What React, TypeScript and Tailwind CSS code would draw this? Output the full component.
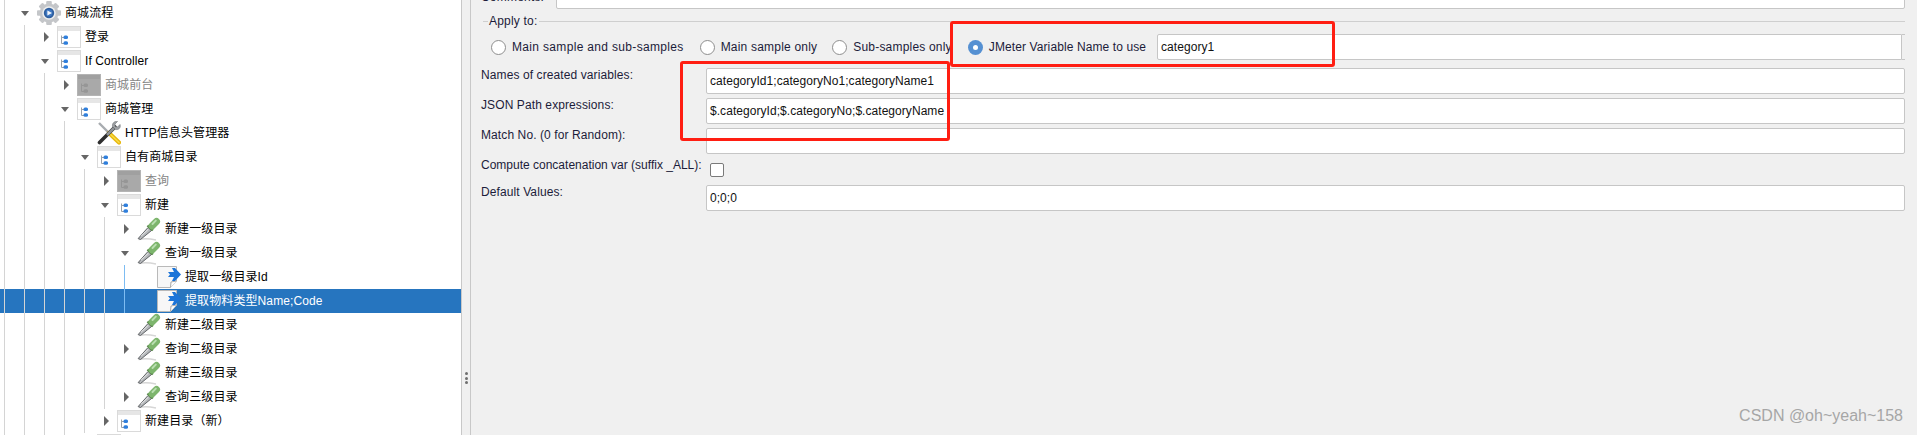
type IconName = "gear" | "folder" | "folderOff" | "tools" | "dropper" | "doc" | "none";

type TreeRow = {
  depth: number;
  label: string;
  icon: IconName;
  arrow?: "open" | "closed";
  disabled?: boolean;
  selected?: boolean;
};

const rows: TreeRow[] = [
  { depth: 0, label: "商城流程", icon: "gear", arrow: "open" },
  { depth: 1, label: "登录", icon: "folder", arrow: "closed" },
  { depth: 1, label: "If Controller", icon: "folder", arrow: "open" },
  { depth: 2, label: "商城前台", icon: "folderOff", arrow: "closed", disabled: true },
  { depth: 2, label: "商城管理", icon: "folder", arrow: "open" },
  { depth: 3, label: "HTTP信息头管理器", icon: "tools" },
  { depth: 3, label: "自有商城目录", icon: "folder", arrow: "open" },
  { depth: 4, label: "查询", icon: "folderOff", arrow: "closed", disabled: true },
  { depth: 4, label: "新建", icon: "folder", arrow: "open" },
  { depth: 5, label: "新建一级目录", icon: "dropper", arrow: "closed" },
  { depth: 5, label: "查询一级目录", icon: "dropper", arrow: "open" },
  { depth: 6, label: "提取一级目录Id", icon: "doc" },
  { depth: 6, label: "提取物料类型Name;Code", icon: "doc", selected: true },
  { depth: 5, label: "新建二级目录", icon: "dropper" },
  { depth: 5, label: "查询二级目录", icon: "dropper", arrow: "closed" },
  { depth: 5, label: "新建三级目录", icon: "dropper" },
  { depth: 5, label: "查询三级目录", icon: "dropper", arrow: "closed" },
  { depth: 4, label: "新建目录（新）", icon: "folder", arrow: "closed" },
  { depth: 3, label: "", icon: "folder" },
];

function GearIcon() {
  const teeth = [0, 45, 90, 135, 180, 225, 270, 315];
  return (
    <svg width="24" height="24" viewBox="0 0 24 24" className="shrink-0">
      <g fill="#c4c6c9">
        {teeth.map((a) => (
          <rect key={a} x="9.2" y="0" width="5.6" height="6" rx="1" transform={`rotate(${a} 12 12)`} />
        ))}
        <circle cx="12" cy="12" r="9.4" />
      </g>
      <circle cx="12" cy="12" r="6.8" fill="#eceded" />
      <circle cx="12" cy="12" r="5.2" fill="#2f5f9f" />
      <circle cx="12" cy="12" r="3.4" fill="#3f79c4" />
      <path d="M10.4 9.4 L15 12 L10.4 14.6 Z" fill="#f2f6fb" />
    </svg>
  );
}

function FolderIcon({ off }: { off?: boolean }) {
  return (
    <svg width="24" height="24" viewBox="0 0 24 24" className="shrink-0">
      <rect x="0.5" y="1.5" width="23" height="21" fill={off ? "#a9a9a9" : "#ffffff"} stroke={off ? "#b4b4b4" : "#dadada"} />
      <rect x="1" y="2" width="22" height="4" fill={off ? "#a0a0a0" : "#e6e6e6"} />
      <path d="M4.5 10.5 V18.5 H7 M4.5 12.5 H7" fill="none" stroke={off ? "#969696" : "#9aa0a8"} />
      <rect x="6.5" y="10.5" width="4.5" height="3.6" rx="1.5" fill={off ? "#969696" : "#2f7fdc"} />
      <rect x="6.5" y="16.2" width="4.5" height="3.6" rx="1.5" fill={off ? "#969696" : "#2f7fdc"} />
    </svg>
  );
}

function ToolsIcon() {
  return (
    <svg width="24" height="24" viewBox="0 0 24 24" className="shrink-0">
      <path d="M2 2 L12 12" stroke="#a8acb0" strokeWidth="2.4" />
      <path d="M12 12 L22 21.5" stroke="#e8b80e" strokeWidth="4.2" strokeLinecap="round" />
      <path d="M12 12 L22 21.5" stroke="#f7dc4a" strokeWidth="1.4" strokeLinecap="round" />
      <path d="M18 6 L2.5 21.5" stroke="#2e2e2e" strokeWidth="3.6" strokeLinecap="round" />
      <path d="M17 7 L10 14" stroke="#8f9296" strokeWidth="2.6" />
      <path d="M23 3.5 L20.5 6 L18 5.5 L18 3 L20.5 0.5 C17.5 0 15 2 15.5 5.5 L18.5 8.5 C22 9 24 6.5 23 3.5 Z" fill="#9ea1a5" stroke="#6d7074" strokeWidth="0.6" />
    </svg>
  );
}

function DropperIcon() {
  return (
    <svg width="24" height="24" viewBox="0 0 24 24" className="shrink-0">
      <path d="M1.5 22.5 C6 21.5 12 21.5 19 23" fill="none" stroke="#d6d6d6" strokeWidth="1.4" />
      <path d="M1.2 21.5 L11 10.5 L14.5 13.5 L3.5 22.5 Z" fill="#b4b7ba" stroke="#55585b" strokeWidth="0.9" />
      <path d="M4.2 19 L11.5 12" stroke="#efefef" strokeWidth="1" />
      <path d="M10.5 8.5 L15.8 13.5" stroke="#4f7f40" strokeWidth="2.4" />
      <path d="M15 9 L19.5 4.5" stroke="#7db56d" strokeWidth="7" strokeLinecap="round" />
      <path d="M15.5 7 L18.8 3.6" stroke="#b9deb0" strokeWidth="2" strokeLinecap="round" />
    </svg>
  );
}

function DocIcon() {
  return (
    <svg width="24" height="24" viewBox="0 0 24 24" className="shrink-0">
      <path d="M0.5 1.5 H19.5 V16 L13.5 22.5 H0.5 Z" fill="#f7f7f7" stroke="#b9b9b9" />
      <path d="M13.5 22.5 L14 17 L19.5 16" fill="#ffffff" stroke="#a8a8a8" />
      <path d="M11 7 H17 L15 3 H18 L24 9.5 L18 16 H15 L17 12 H11 L13 9.5 Z" fill="#1b74d8" />
    </svg>
  );
}

function RowIcon({ name }: { name: IconName }) {
  if (name === "gear") return <GearIcon />;
  if (name === "folder") return <FolderIcon />;
  if (name === "folderOff") return <FolderIcon off />;
  if (name === "tools") return <ToolsIcon />;
  if (name === "dropper") return <DropperIcon />;
  if (name === "doc") return <DocIcon />;
  return null;
}

function Row({ row }: { row: TreeRow }) {
  const guides = Array.from({ length: row.depth + 1 }, (_, i) => i);
  return (
    <div className={`flex h-6 shrink-0 pl-1 ${row.selected ? "bg-[#2675bf]" : ""}`}>
      {guides.map((g) => (
        <div
          key={g}
          className={`w-5 shrink-0 border-l ${g === 6 ? "border-[#7dbcf2]" : "border-[#d4d4d4]"}`}
        />
      ))}
      <div className="flex w-[13px] shrink-0 items-center">
        {row.arrow === "closed" && (
          <svg width="10" height="10" viewBox="0 0 10 10" className="-ml-1 shrink-0 overflow-visible">
            <path d="M4 0 L9 5 L4 10 Z" fill="#666666" />
          </svg>
        )}
        {row.arrow === "open" && (
          <svg width="10" height="10" viewBox="0 0 10 10" className="-ml-1 shrink-0">
            <path d="M1 3 H9 L5 8 Z" fill="#666666" />
          </svg>
        )}
      </div>
      <div className="flex shrink-0 items-center">
        <RowIcon name={row.icon} />
      </div>
      <span
        className={`ml-1 self-center whitespace-nowrap text-[12px] leading-6 tracking-[0.1px] ${
          row.selected ? "text-white" : row.disabled ? "text-[#858585]" : "text-black"
        }`}
      >
        {row.label}
      </span>
    </div>
  );
}

function Radio({ label, checked, className }: { label: string; checked?: boolean; className?: string }) {
  return (
    <div className={`flex shrink-0 items-center ${className ?? ""}`}>
      {checked ? (
        <span className="flex size-[15px] items-center justify-center rounded-full bg-[#5590d2]">
          <span className="size-[5px] rounded-full bg-white" />
        </span>
      ) : (
        <span className="size-[15px] rounded-full border border-[#8e8e8e] bg-white" />
      )}
      <span className="ml-[6px] whitespace-nowrap">{label}</span>
    </div>
  );
}

function Field({ value }: { value?: string }) {
  return (
    <div className="flex h-[26px] items-center rounded-[2px] border border-[#c6c6c6] bg-white pl-[3px] text-[#111111] tracking-[0.05px]">
      {value}
    </div>
  );
}

export default function App() {
  return (
    <div
      className="relative flex h-[435px] w-[1917px] overflow-hidden bg-[#f0f0f0] text-[12px] leading-[14px] text-[#1c1c3a]"
      style={{ fontFamily: '"Liberation Sans", "Noto Sans CJK SC", sans-serif' }}
    >
      {/* Left: test plan tree */}
      <div className="flex h-full w-[462px] shrink-0 flex-col overflow-hidden border-r border-[#c8c8c8] bg-white">
        <div className="ml-1 h-px w-px shrink-0 bg-[#d4d4d4]" />
        {rows.map((row, i) => (
          <Row key={i} row={row} />
        ))}
      </div>

      {/* Splitter */}
      <div className="flex w-2 shrink-0 flex-col items-center justify-center gap-[1.5px] pt-[321px]">
        {[0, 1, 2].map((d) => (
          <span key={d} className="size-[3px] rounded-full bg-[#6e6e6e]" />
        ))}
      </div>

      {/* Right: JSON extractor form */}
      <div className="flex min-w-0 flex-1 flex-col border-l border-[#c8c8c8] pl-[10px] pr-3">
        <div className="-mt-[17px] grid grid-cols-[225px_1fr]">
          <div className="pt-[7px] tracking-[0.2px]">Comments:</div>
          <div className="-ml-[150px]">
            <Field />
          </div>
        </div>

        <div className="flex h-[24px] items-center">
          <div className="ml-[2px] h-px w-[5px] bg-[#cfcfcf]" />
          <span className="px-[1px] tracking-[0.2px]">Apply to:</span>
          <div className="h-px flex-1 bg-[#cfcfcf]" />
        </div>

        <div className="mt-px flex h-[26px] items-center pl-[10px]">
          <Radio label="Main sample and sub-samples" className="tracking-[0.33px]" />
          <Radio label="Main sample only" className="ml-[16px] tracking-[0.2px]" />
          <Radio label="Sub-samples only" className="ml-[15px] tracking-[0.2px]" />
          <Radio label="JMeter Variable Name to use" checked className="ml-[16px] tracking-[0.1px]" />
          <div className="ml-[11px] flex h-[26px] flex-1 items-center rounded-l-[2px] border border-[#c6c6c6] bg-white pl-[3px] tracking-[0.05px] text-[#111111]">
            category1
          </div>
          <div className="h-[26px] w-[3px] border-y border-[#c6c6c6]" />
        </div>

        <div className="mt-2 grid grid-cols-[225px_1fr] gap-y-1 tracking-[0.1px]">
          <div>Names of created variables:</div>
          <Field value="categoryId1;categoryNo1;categoryName1" />
          <div>JSON Path expressions:</div>
          <Field value="$.categoryId;$.categoryNo;$.categoryName" />
          <div>Match No. (0 for Random):</div>
          <Field />
          <div className="h-[23px] whitespace-nowrap tracking-normal">Compute concatenation var (suffix _ALL):</div>
          <div className="pl-1 pt-[5px]">
            <div className="size-[14px] rounded-[2px] border border-[#7a7a7a] bg-white" />
          </div>
          <div>Default Values:</div>
          <Field value="0;0;0" />
        </div>
      </div>

      {/* Red annotations drawn on top of the screenshot */}
      <div className="absolute left-[950px] top-[21px] h-[46px] w-[385px] rounded-[3px] border-[3px] border-[#ff1e12]" />
      <div className="absolute left-[680px] top-[61px] h-[80px] w-[270px] rounded-[3px] border-[3px] border-[#ff1e12]" />

      {/* Watermark */}
      <div className="absolute right-[14px] top-[407px] whitespace-nowrap text-[16px] leading-[18px] text-[#a6a6a6]">
        CSDN @oh~yeah~158
      </div>
    </div>
  );
}
